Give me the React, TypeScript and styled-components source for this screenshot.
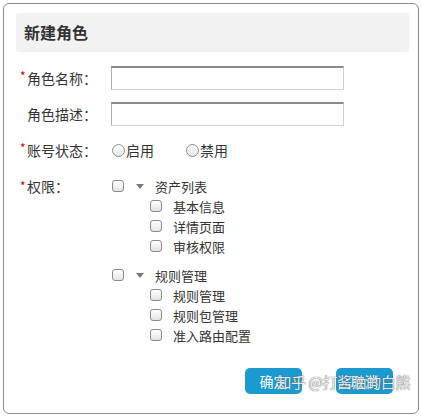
import React from "react";
import styled, { createGlobalStyle } from "styled-components";

const Global = createGlobalStyle`
  html, body { margin: 0; padding: 0; background: #fff; }
  body { font-family: "Noto Sans CJK SC", "Noto Sans", sans-serif; color: #333; }
  * { box-sizing: border-box; }
`;

const Dialog = styled.div`
  position: relative;
  margin: 3px;
  width: 416px;
  height: 411px;
  border: 1px solid #8c8c8c;
  border-radius: 6px;
  padding: 9px 9px 0 12px;
  display: flex;
  flex-direction: column;
`;

const Header = styled.div`
  height: 39px;
  background: #f2f2f2;
  border-radius: 3px;
  padding-left: 8px;
  font-size: 16px;
  font-weight: 700;
  line-height: 39px;
  color: #333;
`;

const Form = styled.div`
  display: flex;
  flex-direction: column;
  padding-left: 4px;
`;

const Row = styled.div<{ $mt: number; $h?: number }>`
  display: grid;
  grid-template-columns: 91px 1fr;
  align-items: start;
  margin-top: ${(p) => p.$mt}px;
  min-height: ${(p) => p.$h ?? 24}px;
`;

const Label = styled.div<{ $h?: number; $indent?: boolean }>`
  font-size: 14px;
  line-height: ${(p) => p.$h ?? 24}px;
  color: #333;
  white-space: nowrap;
  display: flex;
  padding-left: ${(p) => (p.$indent ? 7 : 0)}px;
`;

const Star = styled.span`
  display: inline-block;
  width: 7px;
  color: #c00;
  font-size: 12px;
  line-height: 20px;
`;

const TextInput = styled.input`
  width: 233px;
  height: 24px;
  margin: 0;
  padding: 0 4px;
  border: 1px solid #cfcfcf;
  border-top: 2px solid #8a8a8a;
  border-left-color: #b0b0b0;
  outline: none;
  background: #fff;
  font-family: inherit;
`;

const RadioGroup = styled.div`
  display: flex;
  align-items: center;
  height: 24px;
  padding-left: 1px;
  gap: 32px;
`;

const RadioItem = styled.label`
  display: flex;
  align-items: center;
  gap: 1px;
  font-size: 14px;
  color: #333;
`;

const RadioCircle = styled.span`
  width: 13px;
  height: 13px;
  border-radius: 50%;
  border: 1px solid #8e8e8e;
  background: linear-gradient(#fff, #e6e6e6);
`;

const Tree = styled.div`
  display: flex;
  flex-direction: column;
`;

const Group = styled.div<{ $mt: number }>`
  display: flex;
  flex-direction: column;
  margin-top: ${(p) => p.$mt}px;
`;

const Node = styled.div<{ $indent: number }>`
  display: flex;
  align-items: center;
  height: 20px;
  padding-left: ${(p) => p.$indent}px;
  font-size: 13px;
  color: #333;
`;

const Box = styled.span`
  width: 12px;
  height: 12px;
  border-radius: 3px;
  border: 1px solid #8a8a8a;
  background: linear-gradient(#fff, #e4e4e4);
  flex: none;
`;

const Caret = styled.span`
  width: 0;
  height: 0;
  margin-left: 12px;
  border-left: 4px solid transparent;
  border-right: 4px solid transparent;
  border-top: 5px solid #7a7a7a;
`;

const NodeText = styled.span`
  margin-left: 11px;
`;

const Footer = styled.div`
  display: flex;
  justify-content: flex-end;
  gap: 34px;
  margin-top: 23px;
  padding-right: 16px;
`;

const Button = styled.button`
  width: 57px;
  height: 26px;
  border: none;
  border-radius: 5px;
  background: #1a9ad0;
  color: #fff;
  font-family: inherit;
  font-size: 14px;
  padding: 0;
`;

const Watermark = styled.div`
  position: absolute;
  right: 8px;
  bottom: 22px;
  font-size: 15px;
  letter-spacing: -0.4px;
  line-height: 18px;
  color: rgba(255, 255, 255, 0.9);
  text-shadow: 0 0 1px rgba(80, 80, 80, 0.8), 0 0 1px rgba(80, 80, 80, 0.8);
  pointer-events: none;
  white-space: nowrap;
`;

const groups = [
  { title: "资产列表", items: ["基本信息", "详情页面", "审核权限"] },
  { title: "规则管理", items: ["规则管理", "规则包管理", "准入路由配置"] },
];

export default function App() {
  return (
    <>
      <Global />
      <Dialog>
        <Header>新建角色</Header>
        <Form>
          <Row $mt={14}>
            <Label>
              <Star>*</Star>角色名称：
            </Label>
            <TextInput />
          </Row>
          <Row $mt={12}>
            <Label $indent>角色描述：</Label>
            <TextInput />
          </Row>
          <Row $mt={12}>
            <Label>
              <Star>*</Star>账号状态：
            </Label>
            <RadioGroup>
              <RadioItem>
                <RadioCircle />启用
              </RadioItem>
              <RadioItem>
                <RadioCircle />禁用
              </RadioItem>
            </RadioGroup>
          </Row>
          <Row $mt={14} $h={20}>
            <Label $h={20}>
              <Star>*</Star>权限：
            </Label>
            <Tree>
              {groups.map((g, gi) => (
                <Group key={g.title} $mt={gi === 0 ? 0 : 9}>
                  <Node $indent={1}>
                    <Box />
                    <Caret />
                    <NodeText>{g.title}</NodeText>
                  </Node>
                  {g.items.map((it) => (
                    <Node key={it} $indent={39}>
                      <Box />
                      <NodeText>{it}</NodeText>
                    </Node>
                  ))}
                </Group>
              ))}
            </Tree>
          </Row>
        </Form>
        <Footer>
          <Button>确定</Button>
          <Button>取消</Button>
        </Footer>
        <Watermark>知乎 @打酱油的白熊</Watermark>
      </Dialog>
    </>
  );
}
